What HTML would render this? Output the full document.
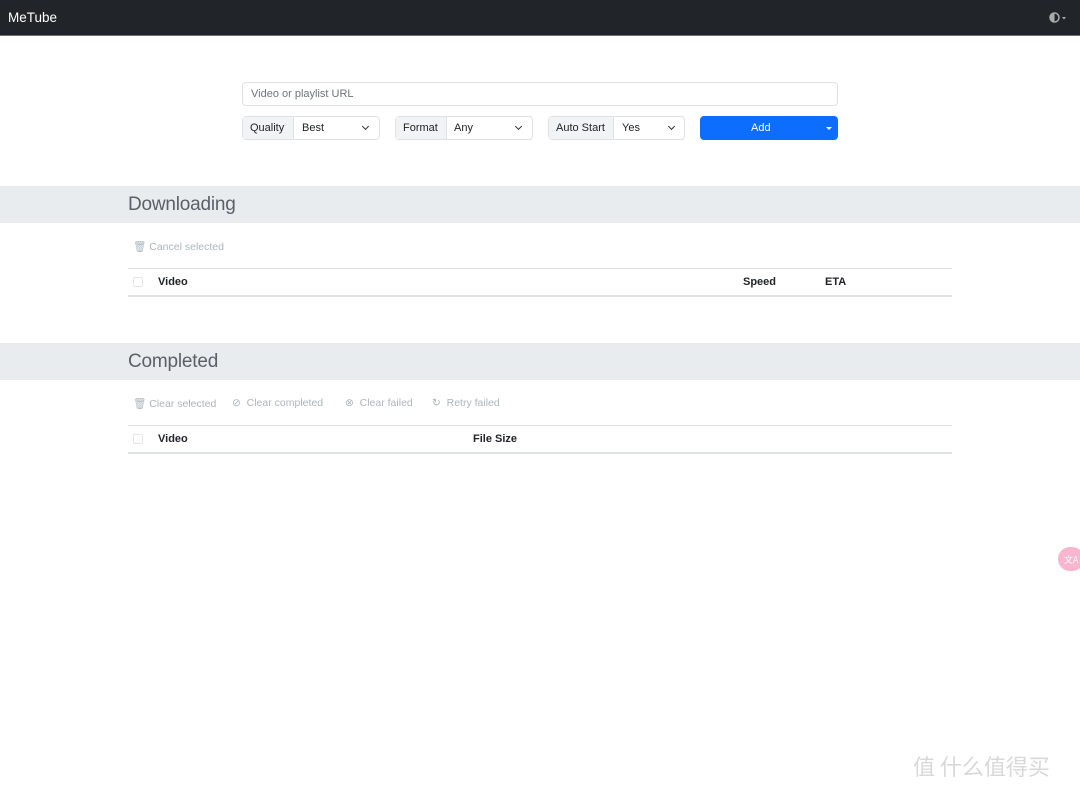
<!DOCTYPE html>
<html><head><meta charset="utf-8"><style>
*{box-sizing:border-box;margin:0;padding:0}
body{width:1080px;height:792px;background:#fff;font-family:"Liberation Sans",sans-serif;font-size:11px;color:#212529;position:relative;overflow:hidden}
.nav{position:absolute;left:0;top:0;width:1080px;height:36px;background:#212529;border-bottom:1px solid #6c6f73}
.brand{position:absolute;left:8px;top:10px;color:#fff;font-size:13.5px}
.abs{position:absolute}
.box{position:absolute;border:1px solid #dee2e6;border-radius:4px;background:#fff}
.lbl{position:absolute;top:0;height:100%;background:#f1f3f5;border-right:1px solid #dee2e6;color:#212529;padding-left:7px;line-height:23px}
.val{position:absolute;top:0;line-height:23px}
.chev{position:absolute;top:7px;width:5px;height:5px;border-right:1.2px solid #333;border-bottom:1.2px solid #333;transform:rotate(45deg)}
.band{position:absolute;left:0;width:1080px;height:37px;background:#e9ecef}
.band span{position:absolute;left:128px;top:8px;font-size:19px;color:#5a6168;letter-spacing:-0.2px}
.act{position:absolute;color:#adb5bd;font-size:10.5px}
.th{position:absolute;font-weight:bold;font-size:11px}
.line{position:absolute;left:128px;width:824px}
.cb{position:absolute;left:133px;width:10px;height:10px;border:1px solid #e3e6e9;border-radius:2px}
</style></head><body>
<div class="nav"><div class="brand">MeTube</div>
<svg class="abs" style="left:1049px;top:12px" width="20" height="12"><circle cx="5.5" cy="5.5" r="4.5" fill="none" stroke="#aaa" stroke-width="1.5"/><path d="M5.5 1a4.5 4.5 0 0 0 0 9z" fill="#aaa"/><path d="M13 5h4l-2 2.5z" fill="#aaa"/></svg>
</div>

<div class="box" style="left:242px;top:82px;width:596px;height:24px"><span class="abs" style="left:8px;top:5px;color:#6c757d">Video or playlist URL</span></div>

<div class="box" style="left:242px;top:116px;width:138px;height:24px"><div class="lbl" style="left:0;width:51px">Quality</div><div class="val" style="left:59px">Best</div><div class="chev" style="left:120px"></div></div>
<div class="box" style="left:395px;top:116px;width:138px;height:24px"><div class="lbl" style="left:0;width:51px">Format</div><div class="val" style="left:58px">Any</div><div class="chev" style="left:120px"></div></div>
<div class="box" style="left:548px;top:116px;width:137px;height:24px"><div class="lbl" style="left:0;width:65px">Auto Start</div><div class="val" style="left:73px">Yes</div><div class="chev" style="left:120px"></div></div>
<div class="abs" style="left:700px;top:116px;width:138px;height:24px;background:#0d6efd;border-radius:4px;color:#fff"><span class="abs" style="left:51px;top:6px">Add</span><span class="abs" style="left:126px;top:11px;border-left:3px solid transparent;border-right:3px solid transparent;border-top:3px solid #fff"></span></div>

<div class="band" style="top:186px"><span>Downloading</span></div>
<div class="act" style="left:133px;top:240px">🗑&#xFE0E; Cancel selected</div>
<div class="line" style="top:268px;border-top:1px solid #dee2e6"></div>
<div class="cb" style="top:277px"></div>
<div class="th" style="left:158px;top:276px">Video</div>
<div class="th" style="left:743px;top:276px">Speed</div>
<div class="th" style="left:825px;top:276px">ETA</div>
<div class="line" style="top:295px;border-top:2px solid #dee2e6"></div>

<div class="band" style="top:343px"><span>Completed</span></div>
<div class="act" style="left:133px;top:397px">🗑&#xFE0E; Clear selected</div>
<div class="act" style="left:232px;top:397px">⊘&nbsp; Clear completed</div>
<div class="act" style="left:345px;top:397px">⊗&nbsp; Clear failed</div>
<div class="act" style="left:432px;top:397px">↻&nbsp; Retry failed</div>
<div class="line" style="top:425px;border-top:1px solid #dee2e6"></div>
<div class="cb" style="top:434px"></div>
<div class="th" style="left:158px;top:433px">Video</div>
<div class="th" style="left:473px;top:433px">File Size</div>
<div class="line" style="top:452px;border-top:2px solid #dee2e6"></div>

<div class="abs" style="left:1058px;top:547px;width:26px;height:24px;border-radius:12px;background:#f7b6cd;color:#fff;font-size:9px;padding:6px 0 0 6px;font-family:'Noto Sans CJK SC',sans-serif">文A</div>
<div class="abs" style="left:913px;top:750px;font-size:22px;color:#d8d8d8;font-family:'Noto Sans CJK SC',sans-serif">值 什么值得买</div>
</body></html>
